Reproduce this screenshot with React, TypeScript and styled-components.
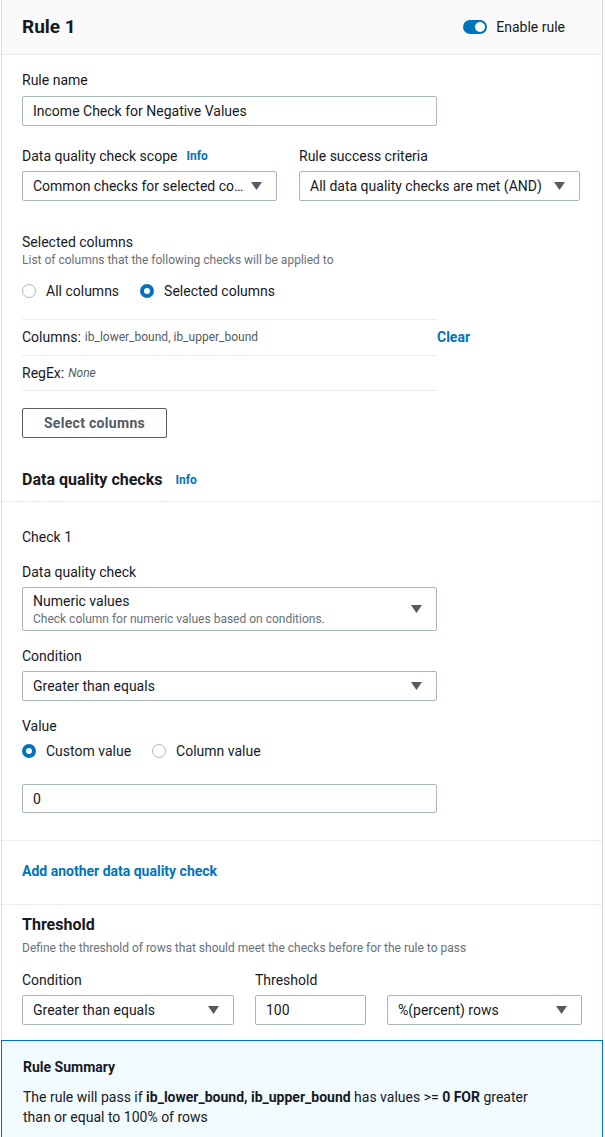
import React from "react";
import styled, { createGlobalStyle } from "styled-components";

const GlobalStyle = createGlobalStyle`
  html, body { margin: 0; padding: 0; background: #ffffff; }
  body {
    font-family: Roboto, "Liberation Sans", Arial, sans-serif;
    color: #16191f;
    font-size: 14px;
    line-height: 20px;
  }
  * { box-sizing: border-box; }
`;

const Card = styled.div`
  margin-left: 1px;
  width: 602px;
  border-left: 1px solid #d5dbdb;
  border-right: 1px solid #d5dbdb;
  background: #ffffff;
  min-height: 1137px;
  display: flex;
  flex-direction: column;
`;

const Header = styled.div`
  height: 55px;
  background: #fafafa;
  border-bottom: 1px solid #eaeded;
  display: flex;
  align-items: center;
  justify-content: space-between;
  padding: 0 37px 0 20px;
`;

const Title = styled.h2`
  margin: 0;
  font-size: 19px;
  font-weight: 700;
  line-height: 22px;
  color: #16191f;
`;

const ToggleWrap = styled.label`
  display: flex;
  align-items: center;
  gap: 9px;
  font-size: 14px;
`;

const Track = styled.span<{ $on: boolean }>`
  width: 24px;
  height: 14px;
  border-radius: 7px;
  background: ${(p) => (p.$on ? "#0073bb" : "#aab7b8")};
  position: relative;
  display: inline-block;
`;

const Knob = styled.span<{ $on: boolean }>`
  position: absolute;
  top: 2px;
  left: ${(p) => (p.$on ? "12px" : "2px")};
  width: 10px;
  height: 10px;
  border-radius: 50%;
  background: #ffffff;
`;

const Section = styled.div<{ $pt?: number; $pb?: number; $border?: boolean; $mt?: number }>`
  margin-top: ${(p) => p.$mt ?? 0}px;
  padding: ${(p) => p.$pt ?? 0}px 20px ${(p) => p.$pb ?? 0}px;
  border-top: ${(p) => (p.$border ? "1px solid #eaeded" : "none")};
  display: flex;
  flex-direction: column;
`;

const Field = styled.div<{ $mt?: number; $w?: number }>`
  margin-top: ${(p) => p.$mt ?? 0}px;
  width: ${(p) => (p.$w ? `${p.$w}px` : "auto")};
  display: flex;
  flex-direction: column;
`;

const Label = styled.div<{ $mb?: number }>`
  font-size: 14px;
  line-height: 20px;
  color: #16191f;
  margin-bottom: ${(p) => p.$mb ?? 5}px;
  display: flex;
  align-items: center;
  gap: 9px;
`;

const InfoLink = styled.span`
  color: #0073bb;
  font-weight: 700;
  font-size: 12px;
  line-height: 16px;
`;

const Desc = styled.div<{ $mt?: number }>`
  margin-top: ${(p) => p.$mt ?? 0}px;
  font-size: 12px;
  line-height: 16px;
  color: #687078;
`;

const TextInput = styled.div<{ $w?: number; $h?: number }>`
  width: ${(p) => (p.$w ? `${p.$w}px` : "415px")};
  height: ${(p) => p.$h ?? 30}px;
  border: 1px solid #aab7b8;
  border-radius: 2px;
  padding: 0 10px;
  display: flex;
  align-items: center;
  font-size: 14px;
  color: #16191f;
  background: #fff;
`;

const SelectBox = styled.div<{ $w: number; $tall?: boolean }>`
  width: ${(p) => p.$w}px;
  height: ${(p) => (p.$tall ? 44 : 30)}px;
  border: 1px solid #aab7b8;
  border-radius: 2px;
  padding: 0 14px 0 10px;
  display: flex;
  align-items: center;
  gap: 6px;
  background: #fff;
`;

const SelectText = styled.div`
  flex: 1;
  min-width: 0;
  display: flex;
  flex-direction: column;
`;

const SelectValue = styled.span`
  font-size: 14px;
  line-height: 18px;
  white-space: nowrap;
  overflow: hidden;
  text-overflow: ellipsis;
`;

const SelectDesc = styled.span`
  font-size: 12px;
  line-height: 16px;
  margin-top: 1px;
  color: #687078;
`;

const Caret = () => (
  <svg width="11" height="8" viewBox="0 0 11 8" style={{ flex: "none" }}>
    <path d="M0 0 H11 L5.5 8 Z" fill="#545b64" />
  </svg>
);

const Row = styled.div<{ $gap: number; $mt?: number }>`
  display: flex;
  gap: ${(p) => p.$gap}px;
  margin-top: ${(p) => p.$mt ?? 0}px;
`;

const RadioGroup = styled.div<{ $mt?: number }>`
  display: flex;
  align-items: center;
  gap: 21px;
  margin-top: ${(p) => p.$mt ?? 0}px;
  height: 20px;
`;

const RadioItem = styled.label`
  display: flex;
  align-items: center;
  gap: 10px;
  font-size: 14px;
`;

const RadioDot = styled.span<{ $on: boolean }>`
  width: 14px;
  height: 14px;
  border-radius: 50%;
  border: ${(p) => (p.$on ? "4px solid #0073bb" : "1.5px solid #aab7b8")};
  background: #fff;
  display: inline-block;
`;

const ColumnsGrid = styled.div`
  margin-top: 18px;
  display: grid;
  grid-template-columns: 415px auto;
`;

const InfoRow = styled.div<{ $last?: boolean }>`
  border-top: 1px solid #eaeded;
  border-bottom: ${(p) => (p.$last ? "1px solid #eaeded" : "none")};
  height: ${(p) => (p.$last ? 36 : 35)}px;
  display: flex;
  align-items: center;
  font-size: 14px;
  gap: 4px;
`;

const InfoValue = styled.span<{ $italic?: boolean }>`
  font-size: 12px;
  color: #545b64;
  font-style: ${(p) => (p.$italic ? "italic" : "normal")};
`;

const ClearLink = styled.span`
  color: #0073bb;
  font-weight: 700;
  font-size: 14px;
  height: 36px;
  display: flex;
  align-items: center;
`;

const Button = styled.button`
  margin-top: 17px;
  width: 145px;
  height: 30px;
  border: 1px solid #545b64;
  border-radius: 2px;
  background: #fff;
  color: #545b64;
  font-family: inherit;
  font-size: 14px;
  font-weight: 700;
  letter-spacing: 0.3px;
  align-self: flex-start;
`;

const SubHeading = styled.div<{ $mt?: number }>`
  margin-top: ${(p) => p.$mt ?? 0}px;
  font-size: 16px;
  font-weight: 700;
  line-height: 20px;
  display: flex;
  align-items: center;
  gap: 13px;
`;

const Link = styled.span`
  color: #0073bb;
  font-weight: 700;
  font-size: 14px;
  line-height: 20px;
`;

const Summary = styled.div`
  margin: 15px -1px 0;
  border: 1px solid #0073bb;
  background: #f1faff;
  padding: 16px 21px 30px;
  flex: 1;
`;

const SummaryTitle = styled.div`
  font-size: 14px;
  font-weight: 700;
  line-height: 20px;
`;

const SummaryText = styled.p`
  margin: 10px 0 0;
  max-width: 525px;
  font-size: 14px;
  line-height: 20px;
`;

export default function App() {
  return (
    <>
      <GlobalStyle />
      <Card>
        <Header>
          <Title>Rule 1</Title>
          <ToggleWrap>
            <Track $on>
              <Knob $on />
            </Track>
            Enable rule
          </ToggleWrap>
        </Header>

        <Section $pt={15}>
          <Field>
            <Label $mb={6}>Rule name</Label>
            <TextInput>Income Check for Negative Values</TextInput>
          </Field>

          <Row $gap={22} $mt={20}>
            <Field $w={255}>
              <Label>
                Data quality check scope <InfoLink>Info</InfoLink>
              </Label>
              <SelectBox $w={255}>
                <SelectText>
                  <SelectValue>Common checks for selected columns</SelectValue>
                </SelectText>
                <Caret />
              </SelectBox>
            </Field>
            <Field $w={281}>
              <Label>Rule success criteria</Label>
              <SelectBox $w={281}>
                <SelectText>
                  <SelectValue>All data quality checks are met (AND)</SelectValue>
                </SelectText>
                <Caret />
              </SelectBox>
            </Field>
          </Row>

          <Field $mt={31}>
            <Label $mb={0}>Selected columns</Label>
            <Desc>List of columns that the following checks will be applied to</Desc>
          </Field>
          <RadioGroup $mt={13}>
            <RadioItem>
              <RadioDot $on={false} />
              All columns
            </RadioItem>
            <RadioItem>
              <RadioDot $on />
              Selected columns
            </RadioItem>
          </RadioGroup>

          <ColumnsGrid>
            <InfoRow>
              Columns: <InfoValue>ib_lower_bound, ib_upper_bound</InfoValue>
            </InfoRow>
            <ClearLink>Clear</ClearLink>
            <InfoRow $last>
              RegEx: <InfoValue $italic>None</InfoValue>
            </InfoRow>
          </ColumnsGrid>

          <Button>Select columns</Button>

          <SubHeading $mt={32}>
            Data quality checks <InfoLink>Info</InfoLink>
          </SubHeading>
        </Section>

        <Section $border $mt={11} $pt={25} $pb={27}>
          <Label $mb={0}>Check 1</Label>
          <Field $mt={15}>
            <Label>Data quality check</Label>
            <SelectBox $w={415} $tall>
              <SelectText>
                <SelectValue>Numeric values</SelectValue>
                <SelectDesc>Check column for numeric values based on conditions.</SelectDesc>
              </SelectText>
              <Caret />
            </SelectBox>
          </Field>
          <Field $mt={15}>
            <Label>Condition</Label>
            <SelectBox $w={415}>
              <SelectText>
                <SelectValue>Greater than equals</SelectValue>
              </SelectText>
              <Caret />
            </SelectBox>
          </Field>
          <Field $mt={15}>
            <Label $mb={0}>Value</Label>
            <RadioGroup $mt={5}>
              <RadioItem>
                <RadioDot $on />
                Custom value
              </RadioItem>
              <RadioItem>
                <RadioDot $on={false} />
                Column value
              </RadioItem>
            </RadioGroup>
          </Field>
          <Field $mt={23}>
            <TextInput $h={29}>0</TextInput>
          </Field>
        </Section>

        <Section $border $pt={20} $pb={23}>
          <Link>Add another data quality check</Link>
        </Section>

        <Section $border $pt={10}>
          <SubHeading>Threshold</SubHeading>
          <Desc $mt={5}>
            Define the threshold of rows that should meet the checks before for the rule to pass
          </Desc>
          <Row $gap={21} $mt={14}>
            <Field $w={212}>
              <Label>Condition</Label>
              <SelectBox $w={212}>
                <SelectText>
                  <SelectValue>Greater than equals</SelectValue>
                </SelectText>
                <Caret />
              </SelectBox>
            </Field>
            <Field $w={111}>
              <Label>Threshold</Label>
              <TextInput $w={111}>100</TextInput>
            </Field>
            <Field $w={195}>
              <Label>&nbsp;</Label>
              <SelectBox $w={195}>
                <SelectText>
                  <SelectValue>%(percent) rows</SelectValue>
                </SelectText>
                <Caret />
              </SelectBox>
            </Field>
          </Row>
        </Section>

        <Summary>
          <SummaryTitle>Rule Summary</SummaryTitle>
          <SummaryText>
            The rule will pass if <b>ib_lower_bound, ib_upper_bound</b> has values &gt;= <b>0</b>{" "}
            <b>FOR</b> greater than or equal to 100% of rows
          </SummaryText>
        </Summary>
      </Card>
    </>
  );
}
